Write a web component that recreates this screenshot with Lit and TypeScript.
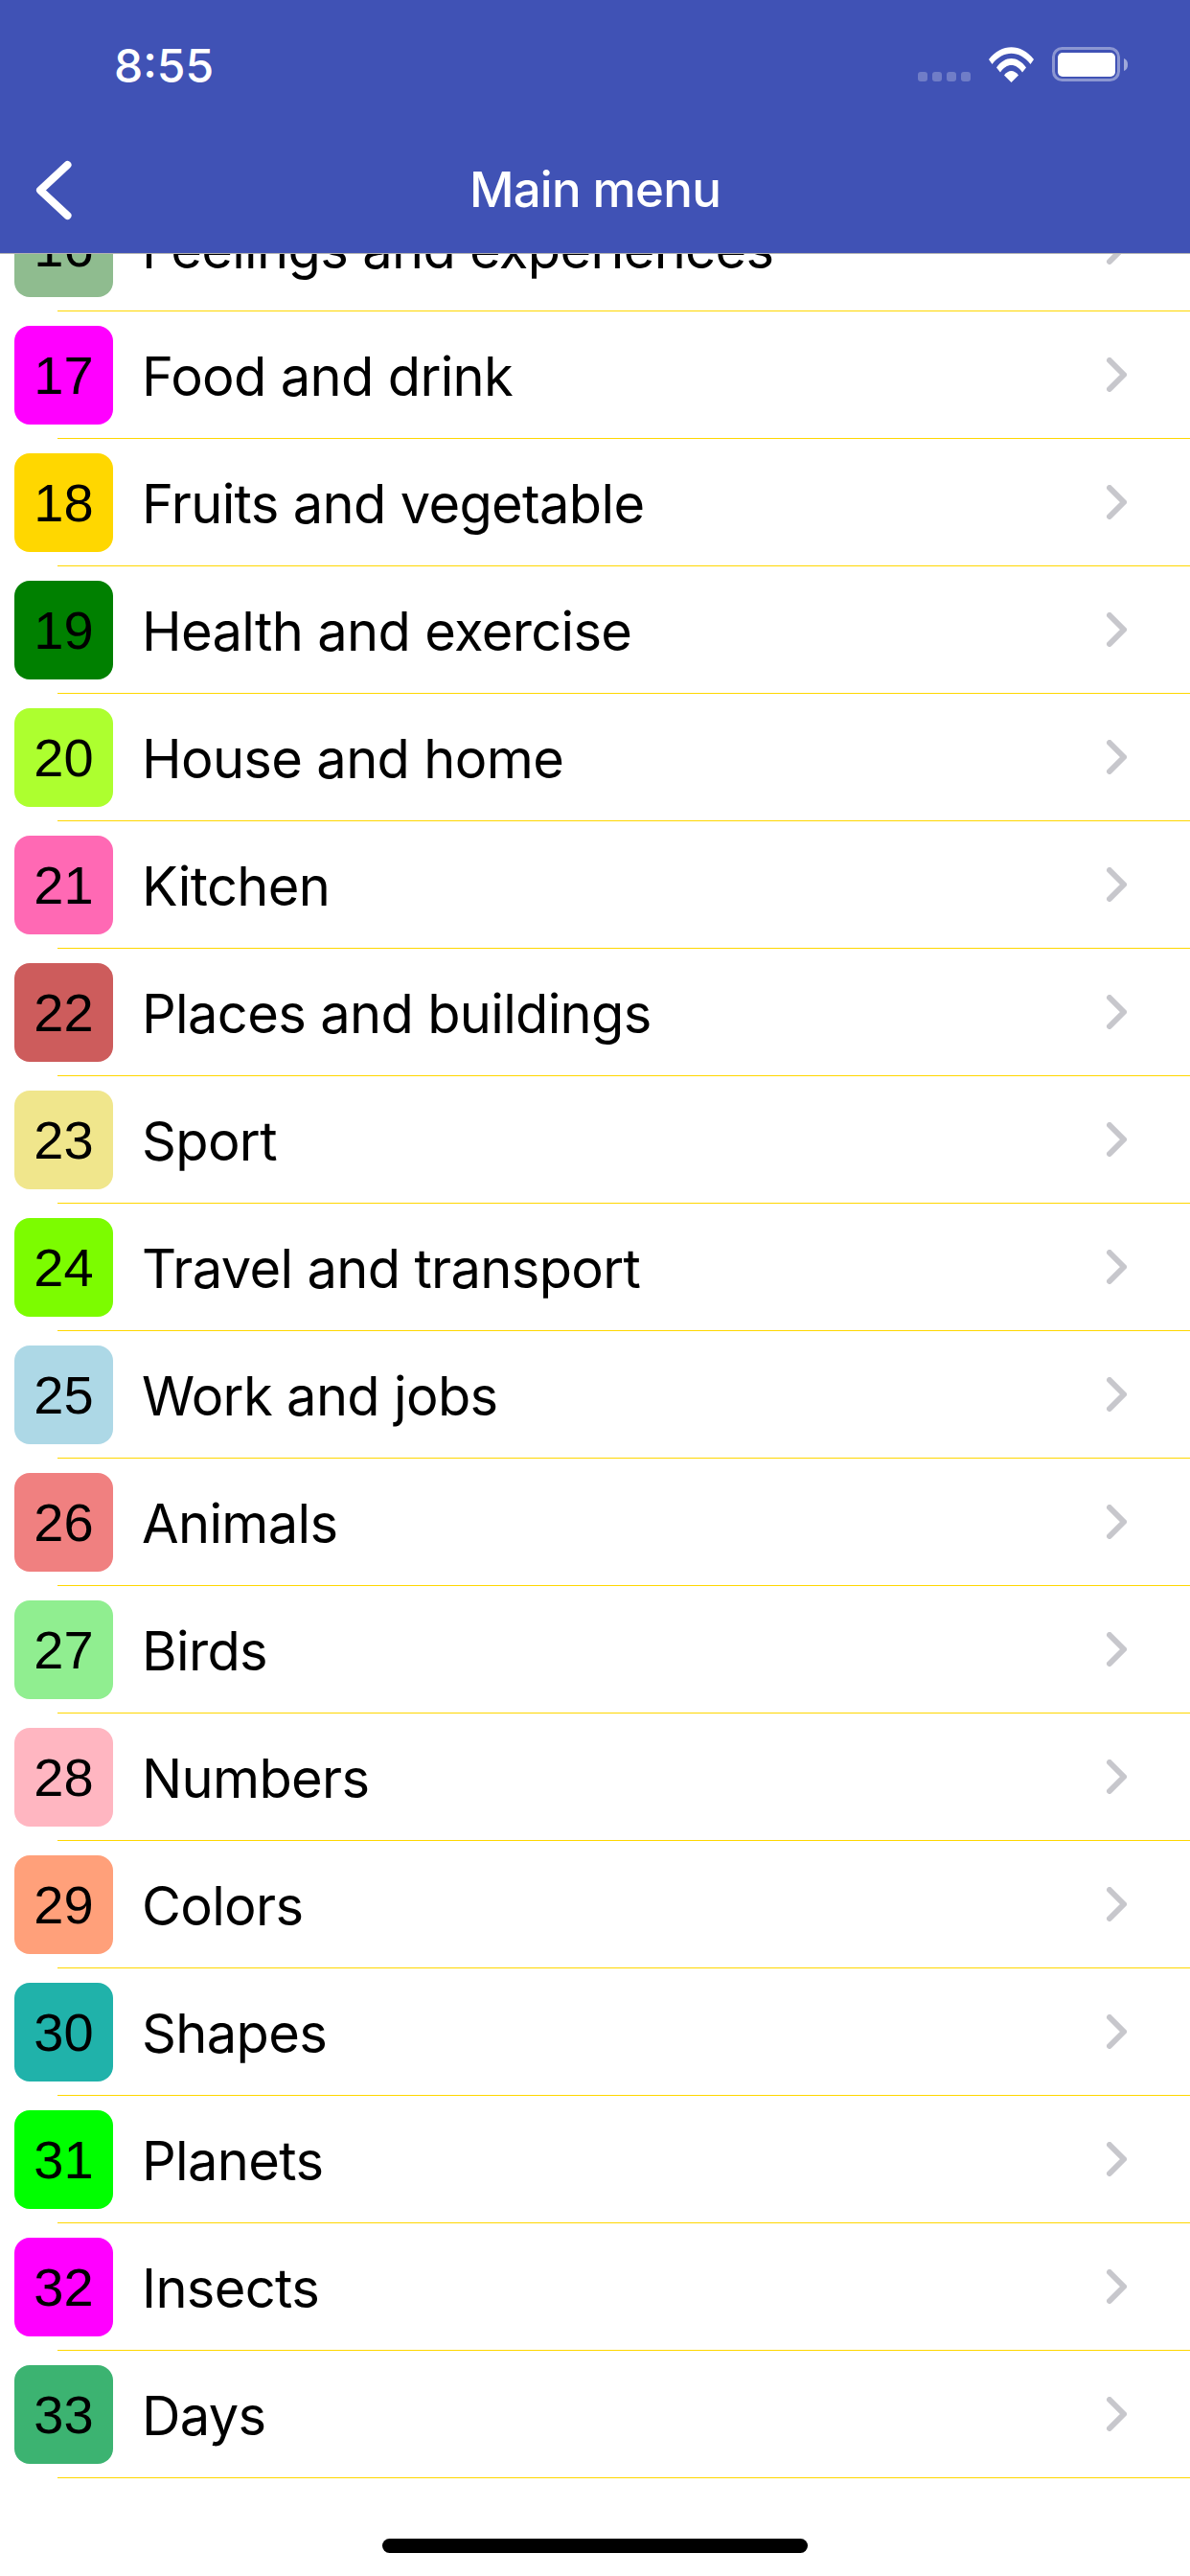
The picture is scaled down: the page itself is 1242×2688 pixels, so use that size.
import { LitElement, html, css, svg } from "lit";
import { customElement } from "lit/decorators.js";

const ROWS: [number, string, string][] = [
  [16, "Feelings and experiences", "#8fbc8f"],
  [17, "Food and drink", "#ff00ff"],
  [18, "Fruits and vegetable", "#ffd700"],
  [19, "Health and exercise", "#008000"],
  [20, "House and home", "#adff2f"],
  [21, "Kitchen", "#ff69b4"],
  [22, "Places and buildings", "#cd5c5c"],
  [23, "Sport", "#f0e68c"],
  [24, "Travel and transport", "#7cfc00"],
  [25, "Work and jobs", "#add8e6"],
  [26, "Animals", "#f08080"],
  [27, "Birds", "#90ee90"],
  [28, "Numbers", "#ffb6c1"],
  [29, "Colors", "#ffa07a"],
  [30, "Shapes", "#20b2aa"],
  [31, "Planets", "#00ff00"],
  [32, "Insects", "#ff00ff"],
  [33, "Days", "#3cb371"],
];

@customElement("app-root")
export class AppRoot extends LitElement {
  static styles = css`
    :host {
      display: flex;
      flex-direction: column;
      width: 1242px;
      height: 2688px;
      overflow: hidden;
      position: relative;
      background: #fff;
      font-family: Inter, Roboto, "Liberation Sans", sans-serif;
      color: #000;
    }
    .header {
      flex: none;
      height: 265px;
      box-sizing: border-box;
      background: #4052b5;
      border-bottom: 1px solid #b2b2b2;
      display: flex;
      flex-direction: column;
      color: #fff;
      position: relative;
      z-index: 1;
    }
    .status {
      height: 132px;
      padding: 46px 64px 0 119px;
      box-sizing: border-box;
      display: flex;
      align-items: flex-start;
      justify-content: space-between;
    }
    .time {
      font-size: 48px;
      line-height: 46px;
      font-weight: 500;
    }
    .status-icons {
      display: block;
      margin-top: 3px;
    }
    .nav {
      flex: 1;
      display: flex;
      align-items: center;
      justify-content: center;
      position: relative;
    }
    .title {
      font-size: 51px;
      font-weight: 500;
      line-height: 60px;
      letter-spacing: -0.8px;
    }
    .back {
      position: absolute;
      left: 34px;
      top: 32px;
    }
    .list {
      flex: 1;
      min-height: 0;
      overflow: hidden;
    }
    .rows {
      margin-top: -73px;
    }
    .row {
      height: 133px;
      box-sizing: border-box;
      display: flex;
      align-items: center;
      position: relative;
      padding: 0 66px 1px 15px;
    }
    .row::after {
      content: "";
      position: absolute;
      left: 60px;
      right: 0;
      bottom: 0;
      height: 1px;
      background: #ffd700;
    }
    .tile {
      flex: none;
      width: 103px;
      height: 103px;
      border-radius: 16px;
      display: flex;
      align-items: center;
      justify-content: center;
      font-family: "Liberation Sans", Arial, sans-serif;
      font-size: 56px;
    }
    .label {
      flex: 1;
      margin-left: 30px;
      padding-top: 3px;
      font-size: 56px;
      letter-spacing: -0.65px;
      line-height: 70px;
      white-space: nowrap;
    }
    .chev {
      flex: none;
      display: block;
    }
    .home {
      position: absolute;
      left: 399px;
      top: 2649px;
      width: 444px;
      height: 15px;
      border-radius: 8px;
      background: #000;
      z-index: 2;
    }
  `;

  private statusIcons() {
    return svg`<svg class="status-icons" width="220" height="42" viewBox="0 0 220 42" fill="none">
      <g fill="#fff" fill-opacity="0.25">
        <rect x="0" y="26" width="10" height="10" rx="3"></rect>
        <rect x="15" y="26" width="10" height="10" rx="3"></rect>
        <rect x="30" y="26" width="10" height="10" rx="3"></rect>
        <rect x="45" y="26" width="10" height="10" rx="3"></rect>
      </g>
      <g fill="#fff">
        <path d="M74 13 C87 -4 108 -4 121 13 L117.500 18 C106 3 89 3 77.500 18 Z"></path>
        <path d="M82 21.500 C91 8.800 104 8.800 113 21.500 L109 26.500 C102.500 16.500 92.500 16.500 86 26.500 Z"></path>
        <path d="M90 29.500 C94.500 23.500 100.500 23.500 105 29.500 L97.500 37 Z"></path>
      </g>
      <rect x="141.500" y="1.500" width="68" height="33" rx="9" stroke="#fff" stroke-opacity="0.4" stroke-width="3"></rect>
      <rect x="146" y="6" width="60" height="25" rx="5" fill="#fff"></rect>
      <path d="M215 12 C218 13 219 15.500 219 18.500 C219 21.500 218 24 215 25 Z" fill="#fff" fill-opacity="0.5"></path>
    </svg>`;
  }

  render() {
    return html`
      <div class="header">
        <div class="status">
          <span class="time">8:55</span>
          ${this.statusIcons()}
        </div>
        <div class="nav">
          <svg class="back" width="44" height="68" viewBox="0 0 44 68" fill="none">
            <path d="M36.500 8 L8 34.500 L36.500 61" stroke="#fff" stroke-width="8" stroke-linecap="round" stroke-linejoin="round"></path>
          </svg>
          <span class="title">Main menu</span>
        </div>
      </div>
      <div class="list">
        <div class="rows">
          ${ROWS.map(
            ([n, label, color]) => html`
              <div class="row">
                <div class="tile" style="background:${color}">${n}</div>
                <div class="label">${label}</div>
                <svg class="chev" width="21" height="36" viewBox="0 0 21 36" fill="none">
                  <path d="M3 3 L18 18 L3 33" stroke="#c7c7cc" stroke-width="6" stroke-linecap="round" stroke-linejoin="round"></path>
                </svg>
              </div>
            `
          )}
        </div>
      </div>
      <div class="home"></div>
    `;
  }
}
